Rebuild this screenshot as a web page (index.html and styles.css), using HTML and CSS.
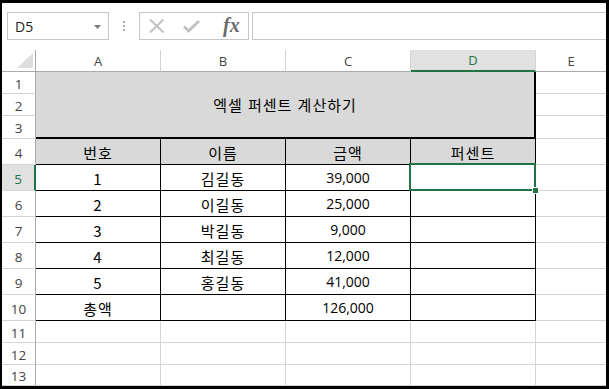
FILE: index.html
```html
<!DOCTYPE html>
<html lang="ko">
<head>
    <meta charset="UTF-8">
    <meta name="viewport" content="width=device-width, initial-scale=1.0">
    <title>엑셀 퍼센트 계산하기</title>
    <link rel="stylesheet" href="styles.css">
</head>
<body>
<div class="window">
    <div class="toolbar">
        <div class="namebox">
            <span>D5</span>
            <svg class="arrow" width="7" height="4" viewBox="0 0 7 4"><path d="M0 0H7L3.5 4Z" fill="#7a7a7a"/></svg>
        </div>
        <div class="dots"><i></i><i></i><i></i></div>
        <div class="fxbox">
            <svg width="18" height="16" viewBox="0 0 18 16"><path d="M2 1.5L15.5 14.5M15.5 1.5L2 14.5" stroke="#c2c2c2" stroke-width="2" fill="none"/></svg>
            <svg width="18" height="14" viewBox="0 0 18 14"><path d="M1 7.5L5.5 12L16 2" stroke="#c2c2c2" stroke-width="3" fill="none"/></svg>
            <span class="fx">fx</span>
        </div>
        <div class="formula"></div>
    </div>

    <div class="sheet">
        <div class="corner"><svg width="16" height="15" viewBox="0 0 16 15"><path d="M16 0V15H0Z" fill="#dedede"/></svg></div>
        <div class="ch">A</div>
        <div class="ch">B</div>
        <div class="ch">C</div>
        <div class="ch on">D</div>
        <div class="ch last">E</div>

        <div class="rh">1</div>
        <div class="title">엑셀 퍼센트 계산하기</div>
        <div class="c last"></div>
        <div class="rh">2</div>
        <div class="c last"></div>
        <div class="rh">3</div>
        <div class="c last"></div>

        <div class="rh">4</div>
        <div class="c t hd">번호</div>
        <div class="c t hd">이름</div>
        <div class="c t hd">금액</div>
        <div class="c t hd">퍼센트</div>
        <div class="c last"></div>

        <div class="rh on">5</div>
        <div class="c t">1</div>
        <div class="c t">김길동</div>
        <div class="c t num">39,000</div>
        <div class="c t sel"><span class="handle"></span></div>
        <div class="c last"></div>

        <div class="rh">6</div>
        <div class="c t">2</div>
        <div class="c t">이길동</div>
        <div class="c t num">25,000</div>
        <div class="c t"></div>
        <div class="c last"></div>

        <div class="rh">7</div>
        <div class="c t">3</div>
        <div class="c t">박길동</div>
        <div class="c t num">9,000</div>
        <div class="c t"></div>
        <div class="c last"></div>

        <div class="rh">8</div>
        <div class="c t">4</div>
        <div class="c t">최길동</div>
        <div class="c t num">12,000</div>
        <div class="c t"></div>
        <div class="c last"></div>

        <div class="rh">9</div>
        <div class="c t">5</div>
        <div class="c t">홍길동</div>
        <div class="c t num">41,000</div>
        <div class="c t"></div>
        <div class="c last"></div>

        <div class="rh">10</div>
        <div class="c t">총액</div>
        <div class="c t"></div>
        <div class="c t num">126,000</div>
        <div class="c t"></div>
        <div class="c last"></div>

        <div class="rh">11</div>
        <div class="c"></div>
        <div class="c"></div>
        <div class="c"></div>
        <div class="c"></div>
        <div class="c last"></div>

        <div class="rh">12</div>
        <div class="c"></div>
        <div class="c"></div>
        <div class="c"></div>
        <div class="c"></div>
        <div class="c last"></div>

        <div class="rh">13</div>
        <div class="c"></div>
        <div class="c"></div>
        <div class="c"></div>
        <div class="c"></div>
        <div class="c last"></div>
    </div>
</div>
</body>
</html>
```

FILE: styles.css
```css
* {
    box-sizing: border-box;
}

body {
    margin: 0;
    background-color: #000;
}

.window {
    width: 609px;
    height: 389px;
    border: solid #000;
    border-width: 3px 3px 3px 2px;
    background-color: #fff;
    font-family: "Noto Sans CJK KR", sans-serif;
    color: #000;
    overflow: hidden;
}

/* formula bar */
.toolbar {
    display: flex;
    align-items: flex-start;
    height: 47px;
    padding: 9px 0 0 5px;
}

.namebox {
    display: flex;
    align-items: center;
    justify-content: space-between;
    width: 102px;
    height: 28px;
    padding: 0 7px 0 7px;
    border: 1px solid #c6c6c6;
    font-family: "Open Sans", sans-serif;
    font-size: 14px;
    color: #222;
}

.namebox .arrow {
    margin-top: 1px;
}

.dots {
    display: flex;
    flex-direction: column;
    gap: 2px;
    margin: 9px 0 0 14px;
}

.dots i {
    display: block;
    width: 2px;
    height: 2px;
    background-color: #a8a8a8;
}

.fxbox {
    display: flex;
    align-items: center;
    width: 110px;
    height: 28px;
    margin-left: 14px;
    padding-left: 8px;
    gap: 17px;
    border: 1px solid #c6c6c6;
}

.fx {
    font-family: "Liberation Serif", serif;
    font-style: italic;
    font-weight: bold;
    font-size: 20px;
    color: #6a6a6a;
    margin-left: 5px;
    margin-top: -2px;
}

.formula {
    flex: 1;
    height: 28px;
    margin-left: 3px;
    border: 1px solid #c6c6c6;
    border-right: none;
}

/* grid */
.sheet {
    display: grid;
    grid-template-columns: 34px repeat(4, 125px) 70px;
    grid-template-rows: 22px 22px 22px 23px repeat(7, 26px) 22px 22px 21px;
}

.sheet > div {
    display: flex;
    align-items: center;
    justify-content: center;
    border-right: 1px solid #d4d4d4;
    border-bottom: 1px solid #d4d4d4;
}

.corner {
    align-items: flex-end !important;
    justify-content: flex-end !important;
    padding: 0 2px 3px 0;
    border-right-color: #ababab !important;
    border-bottom-color: #ababab !important;
}

.ch {
    font-family: "Open Sans", sans-serif;
    font-size: 13px;
    color: #444;
    border-bottom-color: #ababab !important;
}

.rh {
    font-family: "Open Sans", sans-serif;
    font-size: 13.5px;
    color: #444;
    border-right-color: #ababab !important;
    padding-top: 2px;
}

.ch.on {
    background-color: #e1e1e1;
    color: #217346;
    border-bottom: 2px solid #217346 !important;
}

.rh.on {
    background-color: #e1e1e1;
    color: #217346;
    border-right: 2px solid #217346 !important;
}

.sheet > .last {
    border-right: none;
}

.c {
    font-size: 15px;
    letter-spacing: 1px;
    padding-top: 2px;
}

.title {
    grid-column: 2 / 6;
    grid-row: 2 / 5;
    background-color: #d9d9d9;
    font-size: 15px;
    letter-spacing: 1px;
    border-right: 2px solid #000 !important;
    border-bottom: 2px solid #000 !important;
}

.sheet > .t {
    border-right-color: #000;
    border-bottom-color: #000;
}

.hd {
    background-color: #d9d9d9;
}

.num {
    font-family: "Open Sans", sans-serif;
    font-size: 14px;
    letter-spacing: 0;
    padding-top: 0;
}

.sel {
    position: relative;
}

.sel::after {
    content: "";
    position: absolute;
    top: -2px;
    left: -2px;
    right: -1px;
    bottom: -1px;
    border: 2px solid #217346;
}

.handle {
    position: absolute;
    right: -4px;
    bottom: -4px;
    width: 7px;
    height: 7px;
    background-color: #217346;
    border: 1px solid #fff;
    z-index: 1;
}
```
